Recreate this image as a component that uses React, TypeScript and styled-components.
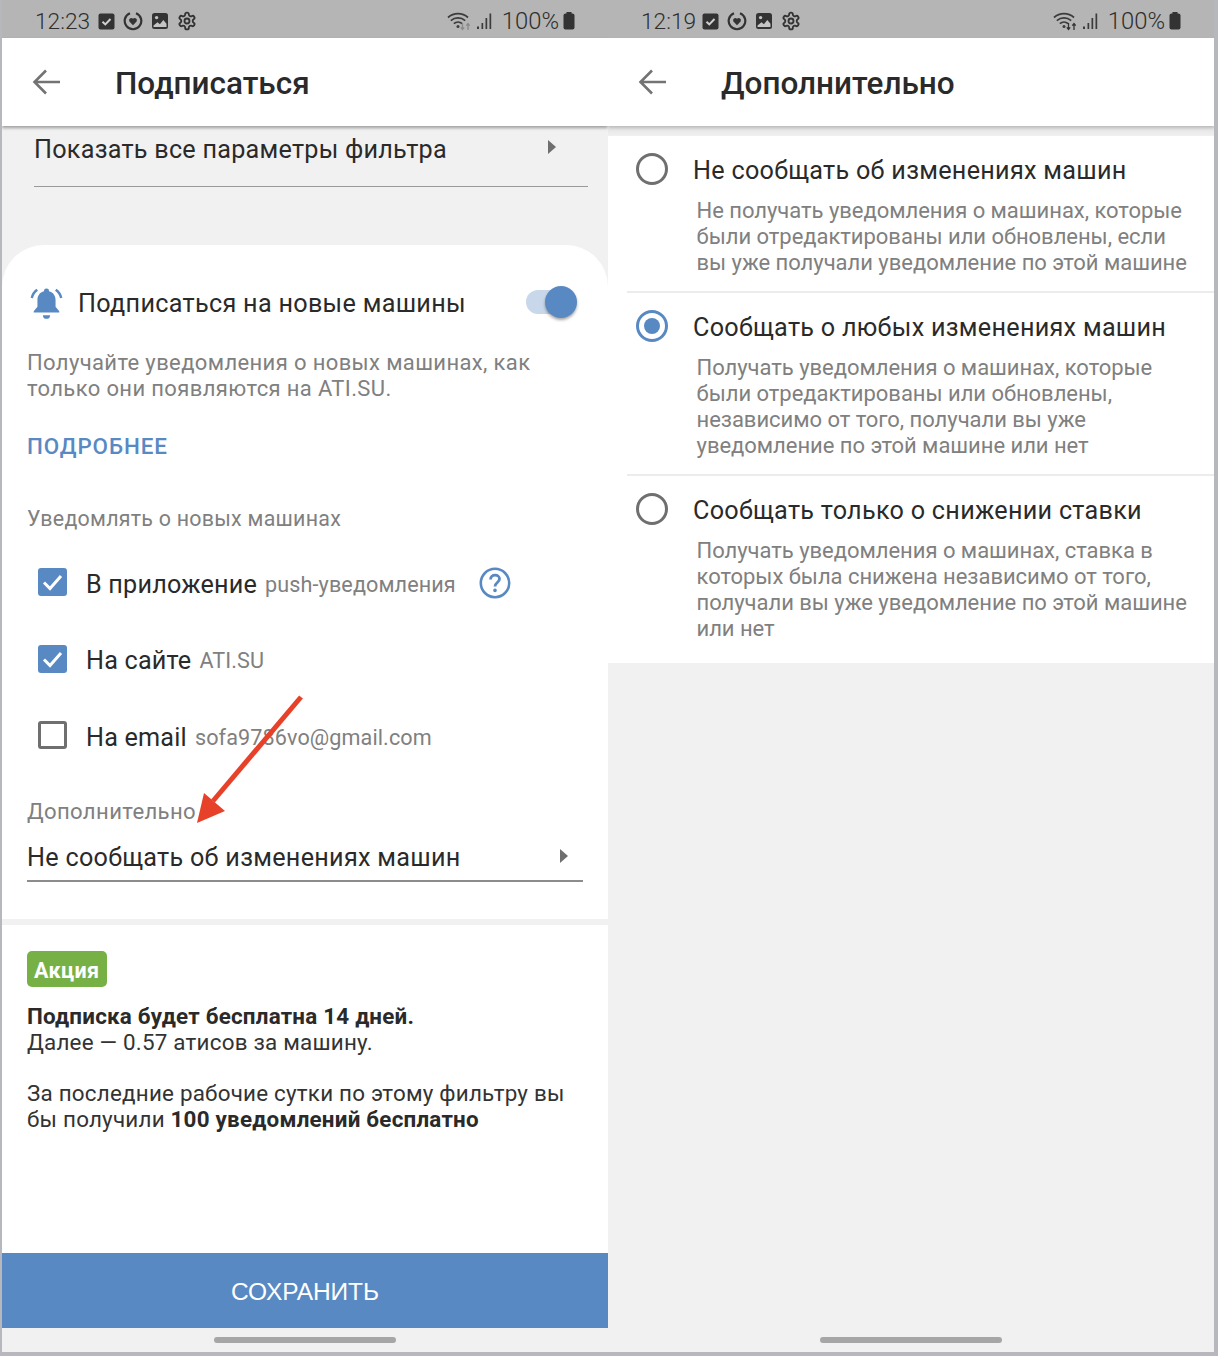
import React from "react";
import styled, { createGlobalStyle } from "styled-components";

const Global = createGlobalStyle`
  html, body { margin: 0; padding: 0; background: #fff; }
  * { box-sizing: border-box; }
`;

const Frame = styled.div`
  width: 1218px;
  height: 1356px;
  background: #b6b8bd;
  padding: 0 4px 4px 2px;
  display: flex;
  font-family: Roboto, "Noto Sans", sans-serif;
  color: #2a2a2a;
  overflow: hidden;
`;
const Phone = styled.div`
  position: relative;
  width: 606px;
  height: 1352px;
  display: flex;
  flex-direction: column;
  background: #f1f1f1;
  overflow: hidden;
`;
const StatusBar = styled.div`
  height: 38px;
  flex: none;
  background: #b5b5b5;
  display: flex;
  align-items: center;
  padding: 4px 33px 0 33px;
  color: #333;
`;
const Clock = styled.span<{ $gap: number }>`
  font-size: 22.7px;
  font-weight: 300;
  color: #2e2e2e;
  margin-right: ${(p) => p.$gap}px;
`;
const StatusIcons = styled.div`
  display: flex;
  align-items: center;
  gap: 8px;
`;
const StatusRight = styled.div`
  margin-left: auto;
  display: flex;
  align-items: center;
`;
const WifiSlot = styled.span`
  display: flex;
  margin-right: 4px;
`;
const Percent = styled.span`
  font-size: 23.8px;
  font-weight: 300;
  color: #2e2e2e;
  margin: 0 4px 0 9px;
`;
const AppBar = styled.header<{ $strong?: boolean }>`
  position: relative;
  z-index: 2;
  height: 88px;
  flex: none;
  background: #fff;
  display: flex;
  align-items: center;
  padding: 0 0 0 30px;
  box-shadow: 0 2px 3px rgba(0, 0, 0, ${(p) => (p.$strong ? 0.35 : 0.18)});
`;
const Title = styled.h1`
  margin: 3px 0 0 55px;
  font-size: 31.5px;
  font-weight: 500;
  color: #2a2a2a;
`;
const Scroll = styled.main`
  flex: 1;
  display: flex;
  flex-direction: column;
  min-height: 0;
`;
const FilterRow = styled.div`
  height: 61px;
  margin: 0 20px 0 32px;
  padding-right: 32px;
  border-bottom: 1.5px solid #9a9a9a;
  flex: none;
  display: flex;
  justify-content: space-between;
  font-size: 25.2px;
  letter-spacing: 0.25px;
  line-height: 47px;
`;
const Caret = styled.span`
  width: 0;
  height: 0;
  margin-top: 14px;
  border-left: 8px solid #6f6f6f;
  border-top: 7.5px solid transparent;
  border-bottom: 7.5px solid transparent;
`;
const Card = styled.section`
  margin-top: 58px;
  height: 674px;
  flex: none;
  background: #fff;
  border-radius: 42px 42px 0 0;
  padding: 0 25px;
`;
const SwitchRow = styled.div`
  position: relative;
  display: flex;
  align-items: center;
  height: 34px;
  margin-top: 41px;
  padding-left: 1.5px;
`;
const RowTitle = styled.span`
  margin-left: 14.5px;
  font-size: 25.2px;
  letter-spacing: 0.3px;
  white-space: nowrap;
`;
const Track = styled.span`
  position: absolute;
  left: 499px;
  top: 4px;
  width: 46px;
  height: 24px;
  border-radius: 12px;
  background: #c8d8ea;
`;
const Thumb = styled.span`
  position: absolute;
  right: -5px;
  top: -4px;
  width: 32px;
  height: 32px;
  border-radius: 50%;
  background: #5889c3;
  box-shadow: 0 2px 3px rgba(0, 0, 0, 0.35);
`;
const Muted = styled.p`
  margin: 0;
  font-size: 22px;
  line-height: 26px;
  letter-spacing: 0.37px;
  color: #808080;
`;
const Intro = styled(Muted)`
  margin-top: 30px;
  white-space: nowrap;
`;
const More = styled.div`
  margin-top: 31px;
  height: 26px;
  line-height: 26px;
  font-size: 22.4px;
  font-weight: 500;
  letter-spacing: 0.9px;
  color: #5889c3;
`;
const SectionLabel = styled(Muted)`
  margin-top: 47px;
  font-size: 21.4px;
  letter-spacing: 0.25px;
`;
const CheckList = styled.div`
  margin-top: 14px;
  display: flex;
  flex-direction: column;
  padding-left: 11px;
`;
const CheckRow = styled.div`
  height: 76.5px;
  display: flex;
  align-items: center;
  white-space: nowrap;
`;
const Box = styled.span<{ $on?: boolean }>`
  width: 29px;
  height: 28px;
  flex: none;
  border-radius: 3px;
  background: ${(p) => (p.$on ? "#5889c3" : "#fff")};
  border: ${(p) => (p.$on ? "none" : "3px solid #6f6f6f")};
  display: flex;
  align-items: center;
  justify-content: center;
  margin: -4px 19px 0 0;
`;
const CheckLabel = styled.span`
  font-size: 25.2px;
  letter-spacing: 0.2px;
`;
const CheckHint = styled.span`
  margin-left: 8px;
  font-size: 21.6px;
  color: #808080;
  letter-spacing: 0.1px;
`;
const Help = styled.span`
  margin: -2px 0 0 23px;
  display: flex;
`;
const ExtraLabel = styled(Muted)`
  margin-top: 22.5px;
  font-size: 22.1px;
`;
const SelectRow = styled.div`
  height: 47px;
  margin-top: 11px;
  border-bottom: 2px solid #8c8c8c;
  display: flex;
  justify-content: space-between;
  padding: 0 15px 0 0;
  font-size: 25.2px;
  letter-spacing: 0.28px;
  line-height: 46px;
`;
const Promo = styled.section`
  margin-top: 6px;
  flex: 1;
  background: #fff;
  padding: 26px 25px 0;
`;
const Badge = styled.span`
  display: inline-block;
  height: 36px;
  line-height: 39px;
  padding: 0 7px;
  border-radius: 5px;
  background: #77b146;
  color: #fff;
  font-size: 21.5px;
  font-weight: 700;
  letter-spacing: 0.4px;
`;
const PromoText = styled.p`
  margin: 16px 0 0;
  font-size: 22.4px;
  line-height: 26px;
  letter-spacing: 0.22px;
  color: #333;
  white-space: nowrap;
  & + & { margin-top: 25px; }
  b { font-weight: 700; color: #2a2a2a; }
`;
const SaveButton = styled.button`
  flex: none;
  height: 75px;
  border: none;
  background: #5889c3;
  color: #fff;
  font: 500 24.5px "Liberation Sans", Arial, sans-serif;
  letter-spacing: -0.1px;
  padding: 2px 0 0;
`;
const NavBar = styled.div`
  height: 24px;
  flex: none;
  display: flex;
  justify-content: center;
  align-items: flex-start;
  padding-top: 9px;
`;
const NavPill = styled.span`
  width: 182px;
  height: 6px;
  border-radius: 3px;
  background: #a6a6a6;
`;
const ArrowOverlay = styled.svg`
  position: absolute;
  left: 0;
  top: 0;
  pointer-events: none;
`;
const Shade = styled.div`
  height: 10px;
  flex: none;
  background: linear-gradient(#e2e2e2, #f1f1f1);
`;
const Options = styled.section`
  background: #fff;
`;
const Option = styled.div<{ $h: number }>`
  height: ${(p) => p.$h}px;
  margin-left: 19px;
  display: grid;
  grid-template-columns: 50px 1fr;
  grid-template-rows: 42px auto;
  align-content: start;
  padding-top: 14px;
  & + & { border-top: 2px solid #ececec; }
`;
const Radio = styled.span<{ $on?: boolean }>`
  width: 32px;
  height: 32px;
  margin: 3px 0 0 9px;
  border-radius: 50%;
  border: 3px solid ${(p) => (p.$on ? "#5889c3" : "#6f6f6f")};
  display: flex;
  align-items: center;
  justify-content: center;
  &::after {
    content: "";
    display: ${(p) => (p.$on ? "block" : "none")};
    width: 16px;
    height: 16px;
    border-radius: 50%;
    background: #5889c3;
  }
`;
const OptionTitle = styled.div`
  padding-left: 16px;
  font-size: 25.2px;
  letter-spacing: 0.28px;
  line-height: 42px;
  white-space: nowrap;
`;
const OptionText = styled(Muted)`
  grid-column: 2;
  padding-left: 19.5px;
  margin-top: 6px;
  letter-spacing: -0.03px;
  line-height: 25.9px;
  white-space: nowrap;
`;

const TaskIcon = () => (
  <svg width="17" height="17" viewBox="0 0 17 17">
    <rect x="0.5" y="0.5" width="16" height="16" rx="2" fill="#333" />
    <path d="M4.5 8.7l2.8 2.7 5.2-5.4" fill="none" stroke="#cfcfcf" strokeWidth="2" />
  </svg>
);
const HeartIcon = () => (
  <svg width="20" height="20" viewBox="0 0 20 20">
    <path d="M13 2.2a8.3 8.3 0 1 1-6 0" fill="none" stroke="#333" strokeWidth="2.2" />
    <path d="M10 14.2l-3.6-3.6a2.3 2.3 0 0 1 3.6-2.8 2.3 2.3 0 0 1 3.6 2.8z" fill="#333" />
  </svg>
);
const PhotoIcon = () => (
  <svg width="18" height="18" viewBox="0 0 18 18">
    <rect x="1" y="1" width="16" height="16" rx="2.5" fill="#333" />
    <circle cx="5.6" cy="5.6" r="1.7" fill="#c4c4c4" />
    <path d="M2.5 13.5l4-3.2 2.4 2 3.4-4.2 3.2 3.7v3.2h-13z" fill="#c4c4c4" />
  </svg>
);
const GearIcon = () => (
  <svg width="20" height="20" viewBox="0 0 24 24" fill="none" stroke="#333" strokeWidth="2.2" strokeLinecap="round" strokeLinejoin="round">
    <path d="M12.22 2h-.44a2 2 0 0 0-2 2v.18a2 2 0 0 1-1 1.73l-.43.25a2 2 0 0 1-2 0l-.15-.08a2 2 0 0 0-2.73.73l-.22.38a2 2 0 0 0 .73 2.73l.15.1a2 2 0 0 1 1 1.72v.51a2 2 0 0 1-1 1.74l-.15.09a2 2 0 0 0-.73 2.73l.22.38a2 2 0 0 0 2.73.73l.15-.08a2 2 0 0 1 2 0l.43.25a2 2 0 0 1 1 1.73V20a2 2 0 0 0 2 2h.44a2 2 0 0 0 2-2v-.18a2 2 0 0 1 1-1.73l.43-.25a2 2 0 0 1 2 0l.15.08a2 2 0 0 0 2.73-.73l.22-.39a2 2 0 0 0-.73-2.73l-.15-.08a2 2 0 0 1-1-1.74v-.5a2 2 0 0 1 1-1.74l.15-.09a2 2 0 0 0 .73-2.73l-.22-.38a2 2 0 0 0-2.73-.73l-.15.08a2 2 0 0 1-2 0l-.43-.25a2 2 0 0 1-1-1.73V4a2 2 0 0 0-2-2z" />
    <circle cx="12" cy="12" r="3" />
  </svg>
);
const WifiIcon = ({ dim }: { dim?: boolean }) => (
  <svg width="26" height="20" viewBox="0 0 26 20" fill="none">
    <path d="M1 6.5a15 15 0 0 1 20 0M3.8 9.6a11 11 0 0 1 14.4 0M6.8 12.6a6.6 6.6 0 0 1 8.4 0" stroke="#3c3c3c" strokeWidth="1.7" />
    <circle cx="11" cy="15.4" r="1.5" fill="#3c3c3c" />
    <path d="M15.5 12v6M13.8 16.4l1.7 2 1.7-2" stroke={dim ? "#8a8a8a" : "#333"} strokeWidth="1.3" />
    <path d="M21 19v-6M19.3 14.6l1.7-2 1.7 2" stroke={dim ? "#8a8a8a" : "#333"} strokeWidth="1.3" />
  </svg>
);
const SignalIcon = () => (
  <svg width="16" height="17" viewBox="0 0 16 17" fill="#3c3c3c">
    <rect x="0" y="13.5" width="2" height="2.5" />
    <rect x="4.5" y="10" width="1.7" height="6" />
    <rect x="8.5" y="5" width="1.7" height="11" />
    <rect x="12.5" y="0.5" width="1.7" height="15.5" />
  </svg>
);
const BatteryIcon = () => (
  <svg width="12" height="18" viewBox="0 0 12 18" fill="#333">
    <rect x="3.5" y="0" width="5" height="2" />
    <rect x="0.5" y="1.5" width="11" height="16" rx="2" />
  </svg>
);
const BackIcon = () => (
  <svg width="28" height="26" viewBox="0 0 28 26" fill="none" stroke="#737373" strokeWidth="2.6">
    <path d="M28 13H3M14 1.5L2.5 13 14 24.5" />
  </svg>
);
const BellIcon = () => (
  <svg width="35" height="35" viewBox="0 0 34 34" fill="#5889c3">
    <path d="M17 2.5a2.4 2.4 0 0 1 2.4 2.6c4.2 1 6.4 4.4 6.4 8.6v6.5l3.6 4.3v1.2H4.6v-1.2l3.6-4.3v-6.5c0-4.2 2.2-7.6 6.4-8.6A2.4 2.4 0 0 1 17 2.5z" />
    <path d="M13.5 28.3h7a3.5 3.5 0 0 1-7 0z" />
    <path d="M8 3.6C5.2 5.6 3.4 8.4 2.7 11.6M26 3.6c2.8 2 4.6 4.8 5.3 8" fill="none" stroke="#5889c3" strokeWidth="2.4" />
  </svg>
);
const TickIcon = () => (
  <svg width="21" height="18" viewBox="0 0 21 18" fill="none" stroke="#fff" strokeWidth="3">
    <path d="M2 9.5l6 6L19 3" />
  </svg>
);
const HelpIcon = () => (
  <svg width="32" height="32" viewBox="0 0 32 32" fill="none" stroke="#5889c3" strokeWidth="2.6">
    <circle cx="16" cy="16" r="14.2" />
    <path d="M11.6 12.4c0-2.6 2-4.2 4.5-4.2s4.4 1.5 4.4 3.8c0 3.4-4.5 3.6-4.5 7.4" strokeWidth="2.8" />
    <circle cx="16" cy="23.4" r="1.8" fill="#5889c3" stroke="none" />
  </svg>
);

const Status = ({ time, dim, gap }: { time: string; dim?: boolean; gap: number }) => (
  <StatusBar>
    <Clock $gap={gap}>{time}</Clock>
    <StatusIcons>
      <TaskIcon />
      <HeartIcon />
      <PhotoIcon />
      <GearIcon />
    </StatusIcons>
    <StatusRight>
      <WifiSlot>
        <WifiIcon dim={dim} />
      </WifiSlot>
      <SignalIcon />
      <Percent>100%</Percent>
      <BatteryIcon />
    </StatusRight>
  </StatusBar>
);

const Nav = () => (
  <NavBar>
    <NavPill />
  </NavBar>
);

const OPTIONS = [
  {
    h: 155,
    title: "Не сообщать об изменениях машин",
    lines: [
      "Не получать уведомления о машинах, которые",
      "были отредактированы или обновлены, если",
      "вы уже получали уведомление по этой машине",
    ],
  },
  {
    h: 183,
    on: true,
    title: "Сообщать о любых изменениях машин",
    lines: [
      "Получать уведомления о машинах, которые",
      "были отредактированы или обновлены,",
      "независимо от того, получали вы уже",
      "уведомление по этой машине или нет",
    ],
  },
  {
    h: 189,
    title: "Сообщать только о снижении ставки",
    lines: [
      "Получать уведомления о машинах, ставка в",
      "которых была снижена независимо от того,",
      "получали вы уже уведомление по этой машине",
      "или нет",
    ],
  },
];

export default function App() {
  return (
    <Frame>
      <Global />
      <Phone>
        <Status time="12:23" dim gap={8} />
        <AppBar $strong>
          <BackIcon />
          <Title>Подписаться</Title>
        </AppBar>
        <Scroll>
          <FilterRow>
            Показать все параметры фильтра
            <Caret />
          </FilterRow>
          <Card>
            <SwitchRow>
              <BellIcon />
              <RowTitle>Подписаться на новые машины</RowTitle>
              <Track>
                <Thumb />
              </Track>
            </SwitchRow>
            <Intro>
              Получайте уведомления о новых машинах, как
              <br />
              только они появляются на ATI.SU.
            </Intro>
            <More>ПОДРОБНЕЕ</More>
            <SectionLabel>Уведомлять о новых машинах</SectionLabel>
            <CheckList>
              <CheckRow>
                <Box $on>
                  <TickIcon />
                </Box>
                <CheckLabel>В приложение</CheckLabel>
                <CheckHint>push-уведомления</CheckHint>
                <Help>
                  <HelpIcon />
                </Help>
              </CheckRow>
              <CheckRow>
                <Box $on>
                  <TickIcon />
                </Box>
                <CheckLabel>На сайте</CheckLabel>
                <CheckHint>ATI.SU</CheckHint>
              </CheckRow>
              <CheckRow>
                <Box />
                <CheckLabel>На email</CheckLabel>
                <CheckHint>sofa9786vo@gmail.com</CheckHint>
              </CheckRow>
            </CheckList>
            <ExtraLabel>Дополнительно</ExtraLabel>
            <SelectRow>
              Не сообщать об изменениях машин
              <Caret />
            </SelectRow>
          </Card>
          <Promo>
            <Badge>Акция</Badge>
            <PromoText>
              <b>Подписка будет бесплатна 14 дней.</b>
              <br />
              Далее — 0.57 атисов за машину.
            </PromoText>
            <PromoText>
              За последние рабочие сутки по этому фильтру вы
              <br />
              бы получили <b>100 уведомлений бесплатно</b>
            </PromoText>
          </Promo>
          <SaveButton>СОХРАНИТЬ</SaveButton>
        </Scroll>
        <Nav />
        <ArrowOverlay width="606" height="1352" viewBox="2 0 606 1352">
          <path d="M301 697L213 801" stroke="#e8412a" strokeWidth="5" fill="none" />
          <path d="M197 823L204 793 225 811z" fill="#e8412a" />
        </ArrowOverlay>
      </Phone>
      <Phone>
        <Status time="12:19" gap={6} />
        <AppBar>
          <BackIcon />
          <Title>Дополнительно</Title>
        </AppBar>
        <Scroll>
          <Shade />
          <Options>
            {OPTIONS.map((o) => (
              <Option key={o.title} $h={o.h}>
                <Radio $on={o.on} />
                <OptionTitle>{o.title}</OptionTitle>
                <OptionText>
                  {o.lines.map((l) => (
                    <React.Fragment key={l}>
                      {l}
                      <br />
                    </React.Fragment>
                  ))}
                </OptionText>
              </Option>
            ))}
          </Options>
        </Scroll>
        <Nav />
      </Phone>
    </Frame>
  );
}
